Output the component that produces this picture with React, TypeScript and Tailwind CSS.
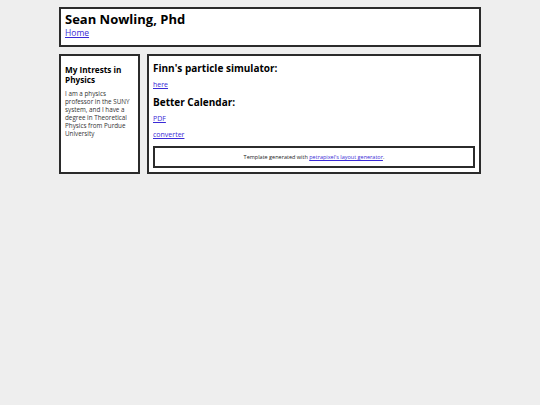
export default function App() {
  return (
    <div className="min-h-[405px] w-full bg-[#eeeeee] pt-[7px] font-['Open_Sans',sans-serif] text-black">
      <div className="mx-auto flex w-[422px] flex-col gap-[7px]">
        <header className="border-2 border-[#2b2b2b] bg-white px-[4px] pb-[7px] pt-[1px]">
          <h1 className="text-[13px] font-bold leading-[18px]">Sean Nowling, Phd</h1>
          <div className="text-[8.5px] leading-[10px]">
            <a href="#" className="text-[#3a2ad6] underline">
              Home
            </a>
          </div>
        </header>

        <div className="flex gap-[7px]">
          <aside className="w-[81px] shrink-0 border-2 border-[#2b2b2b] bg-white px-[4px] pt-[9px]">
            <h2 className="text-[8.2px] font-bold leading-[9.5px]">My Intrests in Physics</h2>
            <p className="mt-[6px] text-[6.3px] leading-[8px] text-[#333]">
              I am a physics professor in the SUNY system, and I have a degree in Theoretical Physics from Purdue
              University
            </p>
          </aside>

          <main className="flex-1 border-2 border-[#2b2b2b] bg-white px-[4px] pb-[4px] pt-[5px]">
            <h2 className="text-[10px] font-bold leading-[14px]">Finn's particle simulator:</h2>
            <p className="mt-[5px] text-[7px] leading-[10px]">
              <a href="#" className="text-[#3a2ad6] underline">here</a>
            </p>
            <h2 className="mt-[5px] text-[10px] font-bold leading-[14px]">Better Calendar:</h2>
            <p className="mt-[5px] text-[7px] leading-[10px]">
              <a href="#" className="text-[#3a2ad6] underline">PDF</a>
            </p>
            <p className="mt-[6px] text-[7px] leading-[10px]">
              <a href="#" className="text-[#3a2ad6] underline">converter</a>
            </p>
            <footer className="mt-[6px] flex h-[22px] items-center justify-center border-2 border-[#2b2b2b] text-[5.5px] text-[#222]">
              <span>
                Template generated with{" "}
                <a href="#" className="text-[#3a2ad6] underline">petrapixel's layout generator</a>.
              </span>
            </footer>
          </main>
        </div>
      </div>
    </div>
  );
}
